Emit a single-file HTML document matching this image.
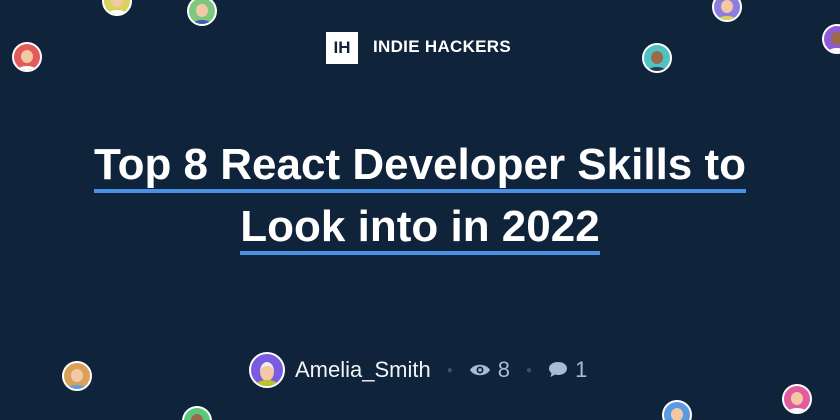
<!DOCTYPE html>
<html><head><meta charset="utf-8"><style>
html,body{margin:0;padding:0;width:840px;height:420px;overflow:hidden}
body{background:#0f233a;position:relative;font-family:"Liberation Sans",sans-serif;color:#fff}
.av{position:absolute;width:26px;height:26px;border-radius:50%;border:2px solid #fff;box-sizing:content-box;overflow:hidden}
.av i{position:absolute;left:7px;top:6px;width:12px;height:13px;border-radius:50%;background:#f3c9a4}
.av b{position:absolute;left:3px;bottom:-6px;width:20px;height:10px;border-radius:50%;background:#fff}
.logo{position:absolute;left:326px;top:32px;width:32px;height:32px;background:#fff;color:#0f233a;font-weight:bold;font-size:17px;line-height:32px;text-align:center}
.brand{position:absolute;left:373px;top:37px;font-weight:bold;font-size:17px;letter-spacing:.3px}
.line{position:absolute;left:0;width:840px;text-align:center;font-weight:bold;font-size:44px;white-space:nowrap}
.line span{border-bottom:4px solid #4a90e2}
.meta{position:absolute;top:352px;left:249px;height:36px;display:flex;align-items:center;font-size:22px}
</style></head><body>
<div class="av" style="left:12px;top:42px;background:#e25c5c"><i></i><b></b></div>
<div class="av" style="left:102px;top:-14px;background:#d8d35a"><i></i><b></b></div>
<div class="av" style="left:187px;top:-4px;background:#7fc77f"><i></i><b style="background:#3b5bb8"></b></div>
<div class="av" style="left:642px;top:43px;background:#4fc3c3"><i style="background:#9a6a4a"></i><b style="background:#2a3a55"></b></div>
<div class="av" style="left:712px;top:-8px;background:#8e7de0"><i></i><b style="background:#d8d35a"></b></div>
<div class="av" style="left:822px;top:24px;background:#8e5bd6"><i style="background:#9a6a4a"></i><b></b></div>
<div class="av" style="left:62px;top:361px;background:#d9a05a"><i></i><b style="background:#5aa0d9"></b></div>
<div class="av" style="left:182px;top:406px;background:#5ac77f"><i style="background:#9a6a4a"></i><b></b></div>
<div class="av" style="left:662px;top:400px;background:#5a9ae2"><i></i><b></b></div>
<div class="av" style="left:782px;top:384px;background:#e25ca0"><i></i><b></b></div>

<div class="logo">IH</div>
<div class="brand">INDIE HACKERS</div>

<div class="line" style="top:140px"><span>Top 8 React Developer Skills to</span></div>
<div class="line" style="top:202px"><span>Look into in 2022</span></div>

<div class="meta">
<div style="width:32px;height:32px;border-radius:50%;border:2px solid #fff;background:#7b5be0;position:relative;overflow:hidden">
<div style="position:absolute;left:9px;top:8px;width:14px;height:15px;border-radius:50%;background:#f3c9a4;border-top:4px solid #eee"></div>
<div style="position:absolute;left:4px;bottom:-7px;width:24px;height:13px;border-radius:50%;background:#b8c42a"></div></div>
<span style="margin-left:10px;color:#f2f4f7">Amelia_Smith</span>
<span style="margin-left:16px;color:#3a5270;font-size:10px">●</span>
<svg style="margin-left:16px" width="22" height="14" viewBox="0 0 22 14"><path d="M1 7C5 0 17 0 21 7C17 14 5 14 1 7Z" fill="#a8bcd4"/><circle cx="11" cy="7" r="3.5" fill="#0f233a"/><circle cx="11" cy="7" r="1.8" fill="#a8bcd4"/></svg>
<span style="margin-left:7px;color:#a8bcd4">8</span>
<span style="margin-left:16px;color:#3a5270;font-size:10px">●</span>
<svg style="margin-left:16px" width="20" height="18" viewBox="0 0 20 18"><path d="M10 1C4.5 1 1 4 1 7.5c0 2 1 3.5 2.5 4.5L2.5 16l4.5-2.5c1 .3 2 .5 3 .5 5.5 0 9-3 9-6.5S15.5 1 10 1Z" fill="#a8bcd4"/></svg>
<span style="margin-left:7px;color:#a8bcd4">1</span>
</div>
</body></html>
